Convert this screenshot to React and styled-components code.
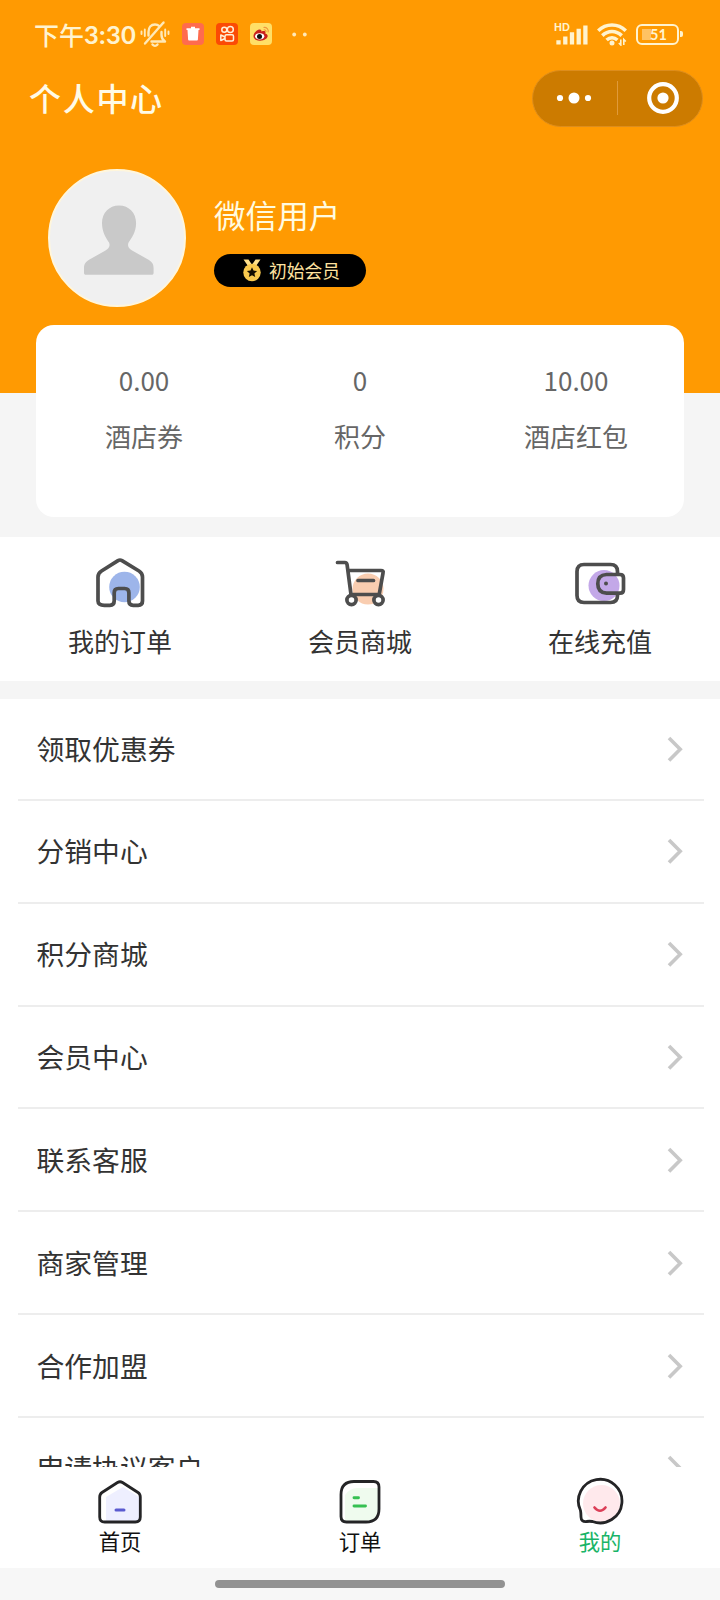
import React from 'react';
import styled, { createGlobalStyle } from 'styled-components';

const GlobalStyle = createGlobalStyle`
  * { box-sizing: border-box; }
  body {
    margin: 0;
    background: #f5f5f5;
    font-family: "Noto Sans CJK SC", sans-serif;
    color: #333;
  }
  svg { display: block; flex: none; }
`;

const Screen = styled.div`
  width: 720px;
  height: 1600px;
  display: flex;
  flex-direction: column;
  overflow: hidden;
  background: #f5f5f5;
`;

const Header = styled.header`
  height: 393px;
  flex: none;
  background: #ff9a02;
`;

const StatusBar = styled.div`
  height: 68px;
  display: flex;
  align-items: center;
  justify-content: space-between;
  padding: 0 41px 0 34px;
  color: #fff3cf;
`;

const StatusGroup = styled.div`
  display: flex;
  align-items: center;
  gap: ${(p) => p.$gap}px;
`;

const Clock = styled.span`
  display: flex;
  align-items: center;
  width: 102px;
  font-size: 25px;
  line-height: 36px;
  font-weight: 500;
  white-space: nowrap;
`;

const ClockDigits = styled.span`
  font-family: Lato, sans-serif;
  font-weight: 700;
  font-size: 25.5px;
  letter-spacing: 0.3px;
`;

const TitleBar = styled.div`
  height: 60px;
  display: flex;
  align-items: center;
  justify-content: space-between;
  padding: 0 17px 0 29px;
`;

const Title = styled.h1`
  margin: -2px 0 0;
  font-size: 32px;
  font-weight: 500;
  letter-spacing: 1.7px;
  line-height: 44px;
  color: #fffbe6;
`;

const Capsule = styled.div`
  width: 171px;
  height: 57px;
  border-radius: 29px;
  border: 1px solid #dd8d1c;
  background: #cc7b00;
  display: flex;
  align-items: center;
`;

const CapsuleButton = styled.div`
  width: 84px;
  display: flex;
  justify-content: center;
  padding-left: ${(p) => p.$shift || 0}px;
  padding-right: ${(p) => p.$inset || 0}px;
`;

const CapsuleDivider = styled.div`
  width: 1px;
  height: 34px;
  background: #e09a3a;
`;

const Profile = styled.section`
  display: flex;
  align-items: center;
  gap: 28px;
  padding: 41px 48px 0;
`;

const Avatar = styled.div`
  width: 138px;
  height: 138px;
  border-radius: 50%;
  border: 2px solid #fff6dc;
  background: #f0f0f0;
  overflow: hidden;
`;

const ProfileInfo = styled.div`
  display: flex;
  flex-direction: column;
  align-items: flex-start;
  padding-top: 2px;
`;

const UserName = styled.div`
  font-size: 31.6px;
  line-height: 44px;
  font-weight: 400;
  color: #fffbe0;
`;

const LevelBadge = styled.div`
  width: 152px;
  height: 33px;
  margin-top: 18px;
  border-radius: 17px;
  background: #000;
  color: #ffe3a0;
  display: flex;
  align-items: center;
  gap: 7px;
  padding: 0 0 1px 28px;
  font-size: 17.8px;
  line-height: 32px;
`;

const BalanceCard = styled.section`
  flex: none;
  height: 192px;
  margin: -68px 36px 20px;
  border-radius: 18px;
  background: #fff;
  display: grid;
  grid-template-columns: repeat(3, 1fr);
  position: relative;
`;

const Balance = styled.div`
  display: flex;
  flex-direction: column;
  align-items: center;
  padding-top: 35px;
  color: #666;
  font-size: 26px;
  line-height: 40px;
`;

const BalanceLabel = styled.span`
  margin-top: 16px;
`;

const QuickGrid = styled.nav`
  flex: none;
  height: 144px;
  margin-bottom: 18px;
  background: #fff;
  display: grid;
  grid-template-columns: repeat(3, 1fr);
`;

const QuickItem = styled.div`
  display: flex;
  flex-direction: column;
  align-items: center;
  padding-top: 16px;
  font-size: 26px;
  line-height: 40px;
`;

const QuickLabel = styled.span`
  margin: 4px 0 0;
`;

const Menu = styled.div`
  flex: 1;
  min-height: 0;
  overflow: hidden;
  padding: 0 16px 0 18px;
  background: #fff;
`;

const MenuRow = styled.div`
  height: 102.83px;
  display: flex;
  align-items: center;
  justify-content: space-between;
  border-bottom: 2px solid #ededed;
  padding: 0 21px 0 18.5px;
  font-size: 27.8px;
  line-height: 40px;
  &:first-child { height: 102px; }
`;

const MenuLabel = styled.span`
  margin-top: -2px;
`;

const TabBar = styled.nav`
  flex: none;
  height: 101px;
  background: #fff;
  display: grid;
  grid-template-columns: repeat(3, 1fr);
`;

const Tab = styled.div`
  display: flex;
  flex-direction: column;
  align-items: center;
  padding-top: 10px;
  font-size: 21.3px;
  line-height: 28px;
  color: ${(p) => (p.$active ? '#19b467' : '#111')};
`;

const HomeArea = styled.div`
  flex: none;
  height: 32px;
  background: #f7f7f7;
  display: flex;
  justify-content: center;
  padding-top: 12px;
`;

const HomeIndicator = styled.div`
  width: 290px;
  height: 8px;
  border-radius: 4px;
  background: #929292;
`;

const MutedBell = () => (
  <svg width="30" height="28" viewBox="0 0 30 28" fill="none" stroke="#ffe9b8" strokeWidth="2.400" strokeLinecap="round" strokeLinejoin="round">
    <path d="M8.500 15.500V12c0-4.500 2.500-7.500 6.500-7.500 1.700 0 3 .4 4 1.300" />
    <path d="M11.500 21.500h13.500c-2.500-1.700-3.500-3.500-3.500-6.500v-3" />
    <path d="M23.500 2.500 5 23.500" />
    <path d="M12.500 24.500c1.500 1.800 3.500 1.800 5 0" />
    <path d="M4.800 9.500v6.500M1.500 11.500v2.500M25.200 9.500v6.500M28.500 11.500v2.500" strokeWidth="1.900" />
  </svg>
);

const TrashApp = () => (
  <svg width="22" height="22" viewBox="0 0 22 22">
    <rect width="22" height="22" rx="4" fill="#ff6b4e" />
    <path d="M4.500 6.200h13M9 4.700h4" stroke="#fff" strokeWidth="1.700" />
    <path d="M5.500 7h11l-.6 9.500a1 1 0 0 1-1 1H7.100a1 1 0 0 1-1-1z" fill="#fff" />
  </svg>
);

const VideoApp = () => (
  <svg width="22" height="22" viewBox="0 0 22 22" fill="none" stroke="#fff0d8" strokeWidth="1.500">
    <rect width="22" height="22" rx="4" fill="#fb4a05" stroke="none" />
    <circle cx="8.300" cy="6.800" r="2.500" />
    <circle cx="14.300" cy="6.500" r="3" />
    <rect x="9" y="11.800" width="8.500" height="6.200" rx="1.500" />
    <path d="M9 14 4.800 12v5.500L9 15.500" strokeLinejoin="round" />
  </svg>
);

const EyeApp = () => (
  <svg width="22" height="22" viewBox="0 0 22 22">
    <rect width="22" height="22" rx="4" fill="#ffdf67" />
    <path d="M3.500 13c0-3.500 4.500-7 7-6.300 1.300.3.800 1.800.8 1.800s4-1.500 4.200.8c0 .8-.3 1.200-.3 1.200 5 1.500 2 7.200-5.200 7.200-4 0-6.500-2-6.500-4.700z" fill="#c9211c" />
    <ellipse cx="9.700" cy="13.300" rx="4.600" ry="3.100" fill="#fff" />
    <circle cx="9.500" cy="13.400" r="2.500" fill="#111" />
    <path d="M13.500 4.500c3-.6 5.500 2 4.600 4.800M13.700 6.800c1.600-.2 2.500.8 2.300 2.200" fill="none" stroke="#f0953a" strokeWidth="1.100" />
  </svg>
);

const MoreDots = () => (
  <svg width="15" height="5" viewBox="0 0 15 5" fill="#ffe9b8">
    <circle cx="2.200" cy="2.500" r="1.900" />
    <circle cx="12.800" cy="2.500" r="1.900" />
  </svg>
);

const StatusSpacer = styled.span`
  width: 8px;
`;

const HdMark = styled.span`
  position: absolute;
  left: -1px;
  top: -1px;
  font: 900 10.300px/10px Lato, sans-serif;
`;

const SignalBox = styled.div`
  position: relative;
`;

const Signal = () => (
  <SignalBox>
    <HdMark>HD</HdMark>
    <svg width="33" height="22" viewBox="0 0 33 22" stroke="#fff3cf" strokeWidth="4.300">
      <path d="M3.500 17.200v4.300M10.300 13.500v8M17 9.300V21.500M23.700 5.800V21.500M30.400 2.500V21.500" />
    </svg>
  </SignalBox>
);

const Wifi = () => (
  <svg width="30" height="24" viewBox="0 0 30 24" fill="none" stroke="#fff3cf" strokeWidth="3.600">
    <path d="M1.200 8.800C9 1 21 1 28.800 8.800M5.300 13.600c5.700-5.500 13.700-5.500 19.400 0M9.600 18c3.300-3 7.500-3 10.800 0" />
    <circle cx="15" cy="21" r="2.500" fill="#fff3cf" stroke="none" />
    <path d="M23.800 17.500V23l-2-2M26.800 23v-5.500l2 2" strokeWidth="1.600" />
  </svg>
);

const BatteryShell = styled.div`
  position: relative;
  width: 43px;
  height: 21px;
  border: 2.500px solid #fff3cf;
  border-radius: 6px;
  font: 700 14.500px/17px Lato, sans-serif;
  text-align: center;
  padding-left: 2px;
  background: linear-gradient(#ffc262, #ffc262) 4px 3px / 9px 11px no-repeat;
  &::after {
    content: "";
    position: absolute;
    right: -6px;
    top: 5.500px;
    width: 3px;
    height: 6px;
    border-radius: 0 2px 2px 0;
    background: #fff3cf;
  }
`;

const MenuDots = () => (
  <svg width="36" height="14" viewBox="0 0 36 14" fill="#fff">
    <circle cx="4" cy="7" r="3.100" />
    <circle cx="18" cy="7" r="5.500" />
    <circle cx="32" cy="7" r="3.100" />
  </svg>
);

const CloseTarget = () => (
  <svg width="32" height="32" viewBox="0 0 32 32">
    <circle cx="16" cy="16" r="13.800" fill="none" stroke="#fff" strokeWidth="4.200" />
    <circle cx="16" cy="16" r="5.600" fill="#fff" />
  </svg>
);

const Person = () => (
  <svg width="134" height="134" viewBox="0 0 134 134">
    <path
      d="M69 34.500c-10 0-17 7.500-17 17.500 0 9 4 15 7 19.500 1.500 3.500 0 6-3.500 8L39.500 88.500c-4.500 2.500-5.500 5-5.500 9v4.500c0 1 .8 1.800 1.800 1.800h66c1 0 1.800-.8 1.800-1.800v-4.500c0-4-1-6.500-5.500-9l-16-9c-3.500-2-5-4.500-3.500-8 3-4.500 7.500-10.500 7.500-19.500 0-10-7-17.500-17.100-17.500z"
      fill="#c9c9c9"
    />
  </svg>
);

const Medal = () => (
  <svg width="20" height="24" viewBox="0 0 20 24">
    <path d="M1.500 1.500h5l3 4.500-3.500 2zM18.500 1.500h-5l-3 4.500 3.500 2z" fill="#ffe08a" />
    <circle cx="10" cy="14.500" r="8.700" fill="#f9c94e" />
    <path d="M10 9.300l1.500 3.300 3.600.4-2.700 2.400.8 3.600-3.200-1.800-3.200 1.800.8-3.600L4.900 13l3.600-.4z" fill="#140d00" />
  </svg>
);

const QuickSvg = ({ children }) => (
  <svg width="56" height="64" viewBox="0 0 56 64" fill="none" stroke="#4d4d4d" strokeWidth="3.700" strokeLinecap="round" strokeLinejoin="round">
    {children}
  </svg>
);

const HouseIcon = () => (
  <QuickSvg>
    <circle cx="32.500" cy="34" r="15.300" fill="#9db5ea" stroke="none" />
    <path d="M26 7.600q2-1.200 4 0L47 18q3.500 2.200 3.500 6v24q0 4.300-4.300 4.300h-5q-4.300 0-4.300-4.300v-8.300q0-4.200-4.300-4.200h-6.200q-4.200 0-4.200 4.200V48q0 4.300-4.300 4.300h-5.600Q6 52.300 6 48V24q0-3.800 3.500-6z" />
  </QuickSvg>
);

const CartIcon = () => (
  <QuickSvg>
    <circle cx="36" cy="36" r="15.500" fill="#f9cdb0" stroke="none" />
    <path d="M5.500 9.500h7.300q2 0 2.300 2.200L19 41.500M16.500 17.500h32.500q2.800 0 2 2.600L47.200 41.500H19M26 27.500h15.500" />
    <circle cx="19.500" cy="47" r="4.600" fill="#fff" />
    <circle cx="46.500" cy="47" r="4.600" fill="#fff" />
  </QuickSvg>
);

const WalletIcon = () => (
  <QuickSvg>
    <circle cx="32" cy="32.600" r="15.500" fill="#c3a8e8" stroke="none" />
    <path d="M45.500 21v-2.500q0-7-7-7h-26.500q-7 0-7 7v24q0 7 7 7h26.500q7 0 7-7v-1.500" />
    <path d="M34.500 21.500h13.500q3.500 0 3.500 3.500v11.500q0 3.700-3.500 3.700h-13.500q-8.700-.5-8.700-9.400t8.700-9.300z" />
    <circle cx="34" cy="30.600" r="2" fill="#4d4d4d" stroke="none" />
  </QuickSvg>
);

const Chevron = () => (
  <svg width="16" height="26" viewBox="0 0 16 26" fill="none" stroke="#c8c8c8" strokeWidth="3.600">
    <path d="M2 2 13.200 13.300 2 24.600" />
  </svg>
);

const TabSvg = ({ children }) => (
  <svg width="50" height="50" viewBox="0 0 50 50" fill="none" stroke="#242426" strokeWidth="2.800" strokeLinejoin="round" strokeLinecap="round">
    {children}
  </svg>
);

const HomeTabIcon = () => (
  <TabSvg>
    <path d="M11 20 28 10l16 10v21q0 4-4 4H11z" fill="#eeefff" stroke="none" />
    <path d="M22.500 5.500q2.500-1.500 5 0L43 15.500q2.300 1.500 2.300 4.500v20q0 5-5 5H9.700q-5 0-5-5V20q0-3 2.300-4.500z" />
    <path d="M21 33h8" stroke="#5a5bd0" strokeWidth="3" />
  </TabSvg>
);

const OrderTabIcon = () => (
  <TabSvg>
    <path d="M10 18q5-7 12-7h21v22q0 11-11 11H10z" fill="#effbee" stroke="none" />
    <path d="M19 4.500h19.500q5.500 0 5.500 5.500v22q0 13-13 13H11.500Q6 45 6 39.500V17.500Q6 4.500 19 4.500z" />
    <path d="M19 20.800h4.500M19 29h11.500" stroke="#36c052" strokeWidth="2.900" />
  </TabSvg>
);

const MineTabIcon = () => (
  <TabSvg>
    <circle cx="26.500" cy="26.500" r="18.500" fill="#ffe9ec" stroke="none" />
    <path d="M5.500 33.500A21.800 21.800 0 1 1 17.500 44.500q-3-.5-6 0Q6 45 6 40q0-4-.5-6.500z" />
    <path d="M19.500 30.500q5.500 6.500 11 0" stroke="#dc3f58" strokeWidth="2.700" />
  </TabSvg>
);

const balances = [
  ['0.00', '酒店券'],
  ['0', '积分'],
  ['10.00', '酒店红包'],
];

const quickLinks = [
  ['我的订单', HouseIcon],
  ['会员商城', CartIcon],
  ['在线充值', WalletIcon],
];

const menuItems = ['领取优惠券', '分销中心', '积分商城', '会员中心', '联系客服', '商家管理', '合作加盟', '申请协议客户'];

const tabs = [
  ['首页', HomeTabIcon],
  ['订单', OrderTabIcon],
  ['我的', MineTabIcon],
];

export default function App() {
  return (
    <Screen>
      <GlobalStyle />
      <Header>
        <StatusBar>
          <StatusGroup $gap={12}>
            <StatusGroup $gap={4}>
              <Clock>下午<ClockDigits>3:30</ClockDigits></Clock>
              <MutedBell />
            </StatusGroup>
            <TrashApp />
            <VideoApp />
            <EyeApp />
            <StatusGroup $gap={0}>
              <StatusSpacer />
              <MoreDots />
            </StatusGroup>
          </StatusGroup>
          <StatusGroup $gap={9}>
            <Signal />
            <Wifi />
            <BatteryShell>51</BatteryShell>
          </StatusGroup>
        </StatusBar>
        <TitleBar>
          <Title>个人中心</Title>
          <Capsule>
            <CapsuleButton $inset={2}><MenuDots /></CapsuleButton>
            <CapsuleDivider />
            <CapsuleButton $shift={6}><CloseTarget /></CapsuleButton>
          </Capsule>
        </TitleBar>
        <Profile>
          <Avatar><Person /></Avatar>
          <ProfileInfo>
            <UserName>微信用户</UserName>
            <LevelBadge><Medal />初始会员</LevelBadge>
          </ProfileInfo>
        </Profile>
      </Header>
      <BalanceCard>
        {balances.map(([value, label]) => (
          <Balance key={label}>
            <span>{value}</span>
            <BalanceLabel>{label}</BalanceLabel>
          </Balance>
        ))}
      </BalanceCard>
      <QuickGrid>
        {quickLinks.map(([label, Icon]) => (
          <QuickItem key={label}>
            <Icon />
            <QuickLabel>{label}</QuickLabel>
          </QuickItem>
        ))}
      </QuickGrid>
      <Menu>
        {menuItems.map((label) => (
          <MenuRow key={label}>
            <MenuLabel>{label}</MenuLabel>
            <Chevron />
          </MenuRow>
        ))}
      </Menu>
      <TabBar>
        {tabs.map(([label, Icon], i) => (
          <Tab key={label} $active={i === 2}>
            <Icon />
            <span>{label}</span>
          </Tab>
        ))}
      </TabBar>
      <HomeArea><HomeIndicator /></HomeArea>
    </Screen>
  );
}
